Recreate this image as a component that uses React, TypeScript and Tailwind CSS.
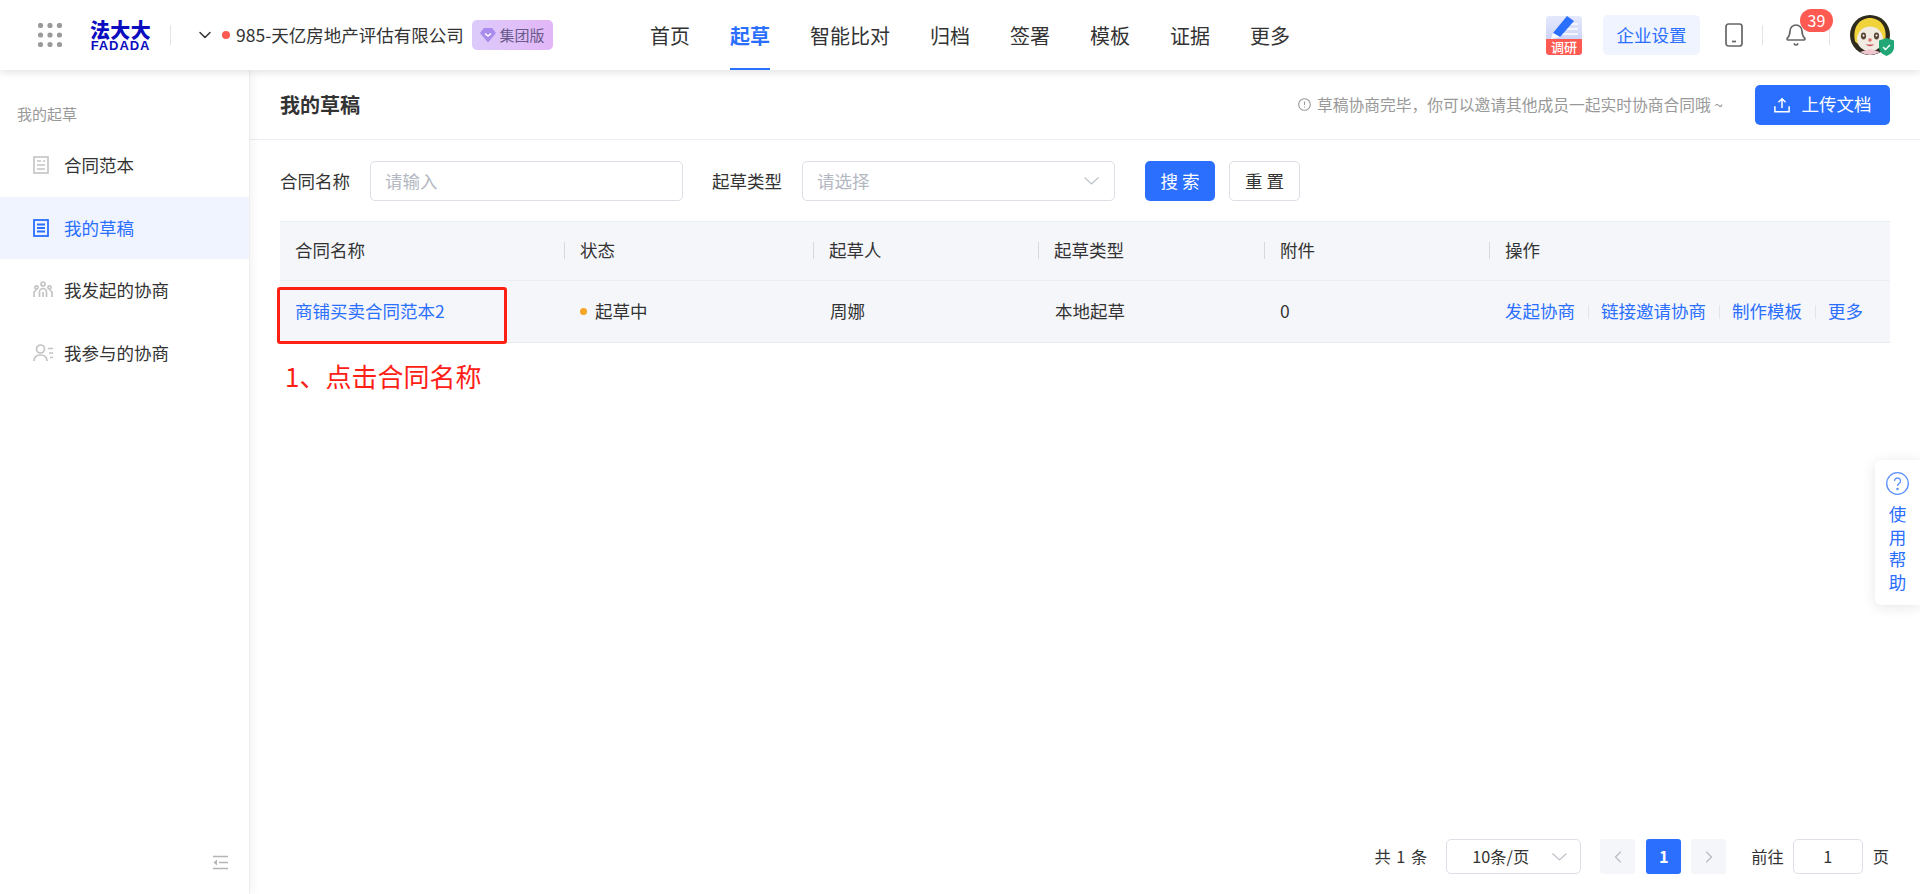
import { Bell, ChevronDown, ChevronLeft, ChevronRight } from 'lucide-react'

const navItems = ['首页', '起草', '智能比对', '归档', '签署', '模板', '证据', '更多']

const columns = [
  { title: '合同名称', width: 'w-[284px]' },
  { title: '状态', width: 'w-[249px]' },
  { title: '起草人', width: 'w-[225px]' },
  { title: '起草类型', width: 'w-[226px]' },
  { title: '附件', width: 'w-[225px]' },
  { title: '操作', width: 'flex-1' }
]

const GridIcon = () => (
  <svg width="24" height="24" viewBox="0 0 24 24" fill="#9a9a9a">
    {[2.5, 12, 21.5].map((y) =>
      [2.5, 12, 21.5].map((x) => <circle key={`${x}-${y}`} cx={x} cy={y} r="2.6" />)
    )}
  </svg>
)

const Logo = () => (
  <div className="flex h-[30px] w-[61px] flex-col items-center text-[#0a0cc0]">
    <span className="h-[19px] text-[20px] leading-[19px] font-black tracking-[0.3px] whitespace-nowrap">法大大</span>
    <span className="mt-[2px] h-[9px] text-[13px] leading-[9px] font-bold tracking-[0.9px] whitespace-nowrap font-['Liberation_Sans',sans-serif]">FADADA</span>
  </div>
)

const DocIcon = ({ color }: { color: string }) => (
  <svg width="16" height="18" viewBox="0 0 16 18" fill="none" stroke={color} strokeWidth="1.8">
    <rect x="1" y="1" width="14" height="16" />
    <path d="M4 5.5h8M4 9h8M4 12.5h8" />
  </svg>
)

const TemplateIcon = () => (
  <svg width="16" height="18" viewBox="0 0 16 18" fill="none" stroke="#c4c4c4" strokeWidth="1.6">
    <rect x="1" y="1" width="14" height="16" />
    <path d="M4 5h4M10 5h2M4 9h8M4 13h8" />
  </svg>
)

const GroupIcon = () => (
  <svg width="20" height="18" viewBox="0 0 20 18" fill="none" stroke="#c4c4c4" strokeWidth="1.7">
    <circle cx="10" cy="3" r="2" />
    <circle cx="3.5" cy="6.5" r="1.6" />
    <circle cx="16.5" cy="6.5" r="1.6" />
    <path d="M6.5 16v-5a3.5 3.5 0 0 1 7 0v5M1 16v-4.5a2.5 2.5 0 0 1 2.5-2M19 16v-4.500a2.500 2.500 0 0 0-2.500-2M10 11v5" />
  </svg>
)

const PersonListIcon = () => (
  <svg width="20" height="18" viewBox="0 0 20 18" fill="none" stroke="#c4c4c4" strokeWidth="1.7">
    <circle cx="7.5" cy="5" r="4" />
    <path d="M1 17c0-4 2.500-6 6.500-6s6.500 2 6.500 6M15 4.500h5M16 9h4M17 13.500h3" />
  </svg>
)

const SurveyIcon = () => (
  <div className="flex h-[39px] w-[36px] flex-col overflow-hidden rounded-[3px] bg-gradient-to-b from-[#e6e9fc] to-[#bcc5f5]">
    <svg className="shrink-0" width="36" height="23" viewBox="0 0 36 23" fill="none">
      <path d="M22 8h10M19 13h13M15 18h17" stroke="#fff" strokeWidth="1.3" />
      <path d="M21 0l7 5-14 16-7-4z" fill="#2b6fff" />
      <path d="M7 17l7 4-9 2z" fill="#fff" />
    </svg>
    <span className="flex h-[16px] items-center justify-center rounded-b-[3px] bg-[#ff5a52] text-[13px] leading-[16px] font-medium whitespace-nowrap text-white">调研</span>
  </div>
)

const PhoneIcon = () => (
  <svg width="18" height="24" viewBox="0 0 18 24" fill="none" stroke="#666" strokeWidth="1.7">
    <rect x="1" y="1" width="16" height="22" rx="2.5" />
    <path d="M7 18.5h4" />
  </svg>
)

const Avatar = () => (
  <div className="relative h-[40px] w-[40px]">
    <svg width="40" height="40" viewBox="0 0 40 40">
      <circle cx="20" cy="20" r="20" fill="#2e2a1c" />
      <path d="M5 26C2 12 10 3 20 3s18 9 15 23c-2 6-28 6-30 0z" fill="#f0d23a" />
      <ellipse cx="20" cy="24" rx="13" ry="12.500" fill="#f2ebe2" />
      <ellipse cx="13.500" cy="21" rx="2.600" ry="3.400" fill="#5a4636" />
      <ellipse cx="26.500" cy="21" rx="2.600" ry="3.400" fill="#5a4636" />
      <circle cx="13.500" cy="20.500" r="1" fill="#fff" />
      <circle cx="26.500" cy="20.500" r="1" fill="#fff" />
      <circle cx="20" cy="25" r="1.800" fill="#d9706c" />
      <path d="M15.500 29.500q4.500 3.500 9 0z" fill="#c9505a" />
      <path d="M10 37l10-3 10 3a20 20 0 0 1-20 0z" fill="#efc6d0" />
    </svg>
    <svg className="absolute right-[-4px] bottom-[-1px]" width="15" height="18" viewBox="0 0 15 18">
      <path d="M7.500 0l7.500 2.500v7c0 4-3.500 7-7.500 8.500C3.500 16.500 0 13.500 0 9.500v-7z" fill="#21a675" />
      <path d="M4 9l2.500 2.500L11 7" stroke="#fff" strokeWidth="1.500" fill="none" />
    </svg>
  </div>
)

const Divider = () => <div className="h-[20px] w-px bg-[#e4e4e4]" />

const SelectArrow = () => (
  <svg className="ml-auto shrink-0" width="15" height="8" viewBox="0 0 15 8" fill="none" stroke="#bcc0c9" strokeWidth="1.1">
    <path d="M.5.5l7 6.500 7-6.500" />
  </svg>
)

const Header = () => (
  <header className="relative z-20 flex h-[70px] shrink-0 items-center bg-white pl-[38px] shadow-[0_2px_8px_rgba(0,0,0,0.12)]">
    <GridIcon />
    <div className="ml-[28px]">
      <Logo />
    </div>
    <div className="ml-[19px]">
      <Divider />
    </div>
    <ChevronDown className="ml-[24px] h-[20px] w-[20px] text-[#333]" strokeWidth={1.8} />
    <span className="ml-[7px] h-[8px] w-[8px] rounded-full bg-[#ff5a52]" />
    <span className="ml-[6px] w-[230px] text-[17.5px] leading-[24px] whitespace-nowrap text-[#333]">985-天亿房地产评估有限公司</span>
    <div className="ml-[6px] flex h-[30px] w-[81px] items-center justify-center gap-[3px] rounded-[5px] bg-gradient-to-r from-[#dccbfa] to-[#e3b6f7]">
      <svg width="16" height="16" viewBox="0 0 16 16">
        <path d="M4 1h8l4 5-8 9.500L0 6z" fill="#a88bec" />
        <path d="M5 6.500l3 2.500 3-2.500" stroke="#fff" strokeWidth="1.600" fill="none" />
      </svg>
      <span className="text-[15px] leading-[20px] whitespace-nowrap text-[#6a5a8c]">集团版</span>
    </div>
    <nav className="ml-[97px] flex h-full gap-[40px]">
      {navItems.map((item) => (
        <div
          key={item}
          className={
            item === '起草'
              ? 'flex h-full items-center border-b-[2px] border-[#2b6fff] pt-[3px] text-[20px] font-bold whitespace-nowrap text-[#2b6fff]'
              : 'flex h-full items-center border-b-[2px] border-transparent pt-[3px] text-[20px] whitespace-nowrap text-[#333]'
          }
        >
          {item}
        </div>
      ))}
    </nav>
    <div className="mr-[30px] ml-auto flex items-center">
      <SurveyIcon />
      <div className="ml-[21px] flex h-[40px] w-[97px] items-center justify-center rounded-[5px] bg-[#f0f4ff] text-[17.5px] whitespace-nowrap text-[#2b6fff]">企业设置</div>
      <div className="ml-[25px]">
        <PhoneIcon />
      </div>
      <div className="ml-[19px]">
        <Divider />
      </div>
      <div className="relative ml-[21px]">
        <Bell className="h-[26px] w-[24px] text-[#666]" strokeWidth={1.7} />
        <span className="absolute top-[-13px] left-[16px] flex h-[23px] w-[33px] items-center justify-center rounded-full bg-[#ff5a52] text-[16px] leading-[23px] text-white">39</span>
      </div>
      <div className="ml-[21px]">
        <Divider />
      </div>
      <div className="ml-[20px]">
        <Avatar />
      </div>
    </div>
  </header>
)

const SideItem = ({ icon, label, active }: { icon: React.ReactNode; label: string; active?: boolean }) => (
  <div className={active ? 'flex h-[62.5px] items-center bg-[#f0f4ff] pl-[33px] text-[#2b6fff]' : 'flex h-[62.5px] items-center pl-[33px] text-[#333]'}>
    <div className="flex w-[20px] justify-start">{icon}</div>
    <span className="ml-[11px] text-[17.5px] whitespace-nowrap">{label}</span>
  </div>
)

const Sidebar = () => (
  <aside className="relative z-10 flex w-[250px] shrink-0 flex-col border-r border-[#eee] bg-white shadow-[2px_0_10px_rgba(0,0,0,0.05)]">
    <div className="mt-[33px] h-[22px] pl-[17px] text-[15px] leading-[22px] text-[#999]">我的起草</div>
    <div className="mt-[9px] flex flex-col">
      <SideItem icon={<TemplateIcon />} label="合同范本" />
      <SideItem icon={<DocIcon color="#2b6fff" />} label="我的草稿" active />
      <SideItem icon={<GroupIcon />} label="我发起的协商" />
      <SideItem icon={<PersonListIcon />} label="我参与的协商" />
    </div>
    <div className="mt-auto mr-[21px] mb-[24px] flex justify-end">
      <svg width="15" height="15" viewBox="0 0 15 15" fill="none" stroke="#b5b5b5" strokeWidth="1.3">
        <path d="M0 1.500h15M6 7.500h9M0 13.500h15" />
        <path d="M4 4.500v6l-3.500-3z" fill="#b5b5b5" stroke="none" />
      </svg>
    </div>
  </aside>
)

const Field = ({ label, placeholder, select }: { label: string; placeholder: string; select?: boolean }) => (
  <div className="flex items-center">
    <span className="text-[17.5px] whitespace-nowrap text-[#333]">{label}</span>
    <div className="ml-[20px] flex h-[40px] w-[313px] items-center rounded-[5px] border border-[#dcdfe6] pr-[15px] pl-[14px]">
      <span className="text-[17.5px] text-[#b4b8c2]">{placeholder}</span>
      {select && <SelectArrow />}
    </div>
  </div>
)

const TableHead = () => (
  <div className="flex h-[60px] border-y border-[#ebeef5] bg-[#f5f6fa] pb-[2px]">
    {columns.map((col, i) => (
      <div key={col.title} className={`${col.width} flex items-center`}>
        <div className={i === 0 ? 'flex h-[17px] items-center pl-[15px] text-[17.5px] whitespace-nowrap text-[#333]' : 'flex h-[17px] items-center border-l border-[#d5d8de] pl-[15px] text-[17.5px] whitespace-nowrap text-[#333]'}>
          {col.title}
        </div>
      </div>
    ))}
  </div>
)

const ActionSep = () => <span className="mx-[12.5px] h-[14px] w-px bg-[#e3e5ea]" />

const TableRow = () => (
  <div className="flex h-[62px] items-center border-b border-[#e8eaee] bg-[#f5f6fa] text-[17.5px] whitespace-nowrap text-[#333]">
    <div className="w-[284px] pl-[15px] text-[#2b6fff]">商铺买卖合同范本2</div>
    <div className="flex w-[249px] items-center pl-[16px]">
      <span className="h-[7px] w-[7px] rounded-full bg-[#f5a623]" />
      <span className="ml-[8px]">起草中</span>
    </div>
    <div className="w-[225px] pl-[17px]">周娜</div>
    <div className="w-[226px] pl-[17px]">本地起草</div>
    <div className="w-[225px] pl-[16px]">0</div>
    <div className="flex flex-1 items-center pl-[16px] text-[#2b6fff]">
      <span>发起协商</span>
      <ActionSep />
      <span>链接邀请协商</span>
      <ActionSep />
      <span>制作模板</span>
      <ActionSep />
      <span>更多</span>
    </div>
  </div>
)

const Pagination = () => (
  <div className="mt-auto mr-[1px] mb-[20px] flex items-center justify-end text-[16.25px] whitespace-nowrap text-[#333]">
    <span className="[word-spacing:2px]">共 1 条</span>
    <div className="ml-[19px] flex h-[35px] w-[135px] items-center rounded-[5px] border border-[#dcdfe6] pr-[13px] pl-[25px] text-[#333]">
      <span>10条/页</span>
      <SelectArrow />
    </div>
    <div className="ml-[19px] flex h-[35px] w-[35px] items-center justify-center rounded-[3px] bg-[#f5f6fa]">
      <ChevronLeft className="h-[20px] w-[20px] text-[#b4b8c2]" strokeWidth={1.3} />
    </div>
    <div className="ml-[11px] flex h-[35px] w-[35px] items-center justify-center rounded-[3px] bg-[#2b6fff] font-bold text-white">1</div>
    <div className="ml-[10px] flex h-[35px] w-[35px] items-center justify-center rounded-[3px] bg-[#f5f6fa]">
      <ChevronRight className="h-[20px] w-[20px] text-[#b4b8c2]" strokeWidth={1.3} />
    </div>
    <span className="ml-[25px]">前往</span>
    <div className="ml-[9px] flex h-[35px] w-[70px] items-center justify-center rounded-[5px] border border-[#dcdfe6]">1</div>
    <span className="ml-[10px]">页</span>
  </div>
)

const HelpTab = () => (
  <div className="absolute top-[460px] right-0 flex h-[145px] w-[45px] flex-col items-center rounded-l-[6px] bg-white pt-[12px] text-[#2b6fff] shadow-[0_2px_14px_rgba(0,0,0,0.10)]">
    <svg width="23" height="23" viewBox="0 0 23 23" fill="none" stroke="#5b8fff" strokeWidth="1.3">
      <circle cx="11.500" cy="11.500" r="10.800" />
      <path d="M8.500 9a3 3 0 1 1 4.500 2.600c-1 .6-1.500 1.100-1.500 2.400" />
      <circle cx="11.500" cy="17" r=".6" fill="#5b8fff" />
    </svg>
    <div className="mt-[8px] w-[18px] text-center text-[17.5px] leading-[22.5px]">使用帮助</div>
  </div>
)

export default function App() {
  return (
    <div className="relative flex h-[894px] w-[1920px] flex-col overflow-hidden bg-white font-['Noto_Sans_CJK_SC','Noto_Sans',sans-serif]">
      <Header />
      <div className="flex min-h-0 flex-1">
        <Sidebar />
        <main className="relative flex min-w-0 flex-1 flex-col">
          <div className="flex h-[70px] shrink-0 items-center border-b border-[#ebeef5] pr-[30px] pl-[30px]">
            <h1 className="text-[20px] font-bold text-[#333]">我的草稿</h1>
            <div className="ml-auto flex items-center text-[#999]">
              <svg width="13" height="13" viewBox="0 0 13 13" fill="none" stroke="#999" strokeWidth="1.1">
                <circle cx="6.500" cy="6.500" r="5.800" />
                <path d="M6.500 3.500v3.500M6.500 8.500v1" />
              </svg>
              <span className="ml-[6px] text-[15.75px] whitespace-nowrap">草稿协商完毕，你可以邀请其他成员一起实时协商合同哦 ~</span>
            </div>
            <button className="ml-[32px] flex h-[40px] w-[135px] items-center justify-center rounded-[5px] bg-[#2b6fff] text-[17.5px] text-white">
              <svg width="16" height="16" viewBox="0 0 18 17" fill="none" stroke="#fff" strokeWidth="1.7">
                <path d="M1 10v6h16v-6M9 12V2M5 5.500L9 1.500l4 4" />
              </svg>
              <span className="ml-[12px] whitespace-nowrap">上传文档</span>
            </button>
          </div>
          <div className="flex flex-1 flex-col pr-[30px] pl-[30px]">
            <div className="mt-[21px] flex items-center">
              <Field label="合同名称" placeholder="请输入" />
              <div className="ml-[29px]">
                <Field label="起草类型" placeholder="请选择" select />
              </div>
              <button className="ml-[30px] h-[40px] w-[70px] rounded-[5px] bg-[#2b6fff] text-[17.5px] whitespace-nowrap text-white">搜 索</button>
              <button className="ml-[14px] h-[40px] w-[71px] rounded-[5px] border border-[#dcdfe6] text-[17.5px] whitespace-nowrap text-[#333]">重 置</button>
            </div>
            <div className="mt-[20px]">
              <TableHead />
              <TableRow />
            </div>
            <div className="mt-[15px] ml-[5px] text-[26px] leading-[36px] text-[#ff2015]">1、点击合同名称</div>
            <Pagination />
          </div>
          {/* annotation drawn over the first cell */}
          <div className="absolute top-[217px] left-[27px] h-[57px] w-[230px] rounded-[3px] border-[3px] border-[#ff2015]" />
        </main>
      </div>
      <HelpTab />
    </div>
  )
}
